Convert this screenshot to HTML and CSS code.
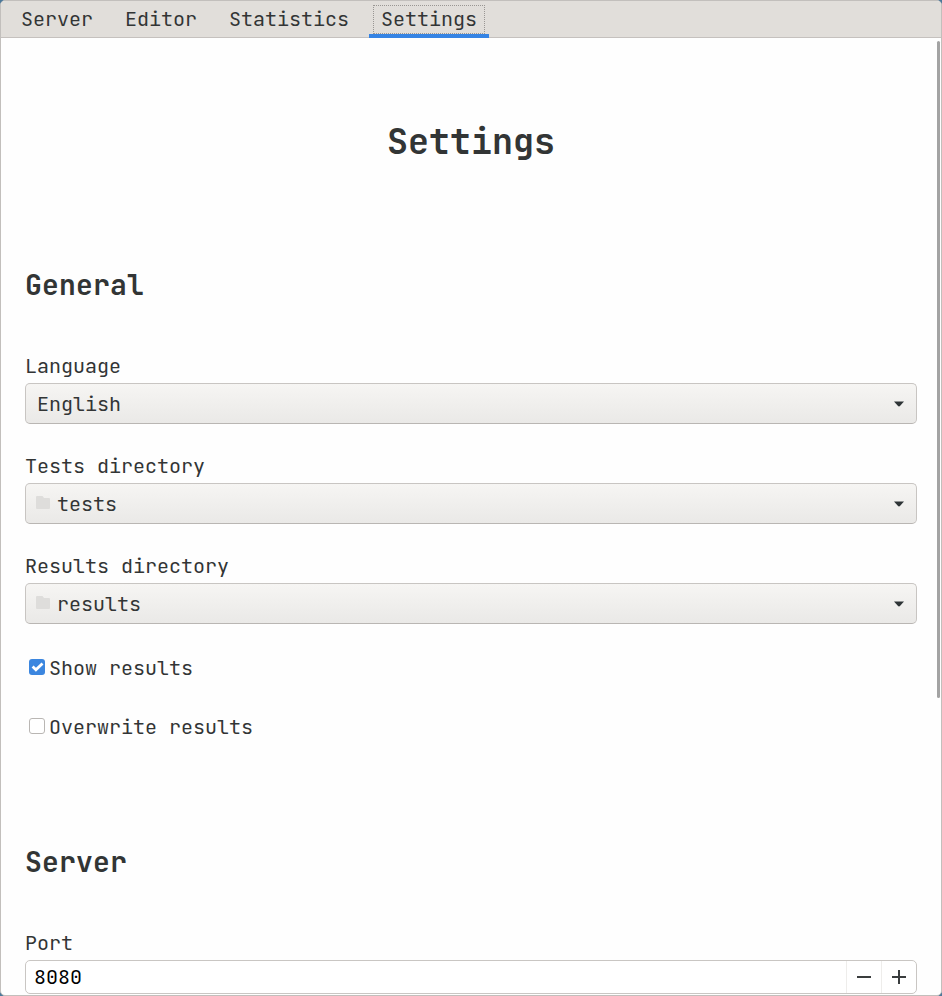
FILE: index.html
```html
<!DOCTYPE html>
<html lang="en">
<head>
<meta charset="utf-8">
<title>Settings</title>
<link rel="stylesheet" href="styles.css">
</head>
<body>
<div class="window">
  <nav class="tabs">
    <div class="tab">Server</div>
    <div class="tab">Editor</div>
    <div class="tab">Statistics</div>
    <div class="tab active">Settings</div>
  </nav>
  <main class="page">
    <h1>Settings</h1>
    <h2>General</h2>
    <div class="field">
      <div class="label">Language</div>
      <div class="select"><span class="text">English</span><svg class="arrow" width="10" height="6" viewBox="0 0 10 6"><path d="M0 .5h10L6.200 4.800Q5 6 3.800 4.800z"/></svg></div>
    </div>
    <div class="field">
      <div class="label">Tests directory</div>
      <div class="select"><svg class="folder" width="14" height="13" viewBox="0 0 14 13"><path d="M0 1q0-1 1-1h5.500l1.500 2h5q1 0 1 1v9q0 1-1 1H1q-1 0-1-1z"/></svg><span class="text">tests</span><svg class="arrow" width="10" height="6" viewBox="0 0 10 6"><path d="M0 .5h10L6.200 4.800Q5 6 3.800 4.800z"/></svg></div>
    </div>
    <div class="field">
      <div class="label">Results directory</div>
      <div class="select"><svg class="folder" width="14" height="13" viewBox="0 0 14 13"><path d="M0 1q0-1 1-1h5.500l1.500 2h5q1 0 1 1v9q0 1-1 1H1q-1 0-1-1z"/></svg><span class="text">results</span><svg class="arrow" width="10" height="6" viewBox="0 0 10 6"><path d="M0 .5h10L6.200 4.800Q5 6 3.800 4.800z"/></svg></div>
    </div>
    <div class="option"><span class="box checked"><svg width="16" height="16" viewBox="0 0 16 16"><path d="M3.600 7.600l3.300 3.200L13.500 4.500"/></svg></span><span class="text">Show results</span></div>
    <div class="option"><span class="box"></span><span class="text">Overwrite results</span></div>
    <h2 class="later">Server</h2>
    <div class="label">Port</div>
    <div class="spin">
      <span class="value">8080</span>
      <span class="step"><svg width="16" height="16" viewBox="0 0 16 16"><path d="M1 8h14"/></svg></span>
      <span class="step"><svg width="16" height="16" viewBox="0 0 16 16"><path d="M1 8h14M8 1v14"/></svg></span>
    </div>
  </main>
  <div class="scrollbar"></div>
</div>
</body>
</html>
```
FILE: styles.css
```css
* { box-sizing: border-box; }
html { background: #4c7899; overflow: hidden; }
body {
  margin: 0;
  font: 20px/27px "JetBrains Mono", "DejaVu Sans Mono", monospace;
  color: #323535;
}
svg { display: block; flex: none; }
.window {
  position: relative;
  height: 996px;
  border: 1px solid #c2bfbc;
  border-radius: 5px;
  background: #fefefe;
  overflow: hidden;
}
.tabs {
  display: flex;
  gap: 8px;
  height: 37px;
  padding-left: 8px;
  background: #e1deda;
  border-bottom: 1px solid #c5c1be;
}
.tab {
  position: relative;
  height: 36px;
  padding: 0 12px;
  line-height: 36px;
}
.active { height: 37px; box-shadow: inset 0 -4px #3584e4; }
.active::after {
  content: "";
  position: absolute;
  inset: 4px 4px 4px;
  border: 1px dotted #999693;
}
.page { padding: 80px 24px 0; }
h1, h2 { font-weight: bold; }
h1 {
  margin: 0 0 101px;
  font-size: 35px;
  line-height: 47px;
  text-align: center;
}
h2 { margin: 0 0 49px; font-size: 28px; line-height: 38px; letter-spacing: 0.2px; }
.later { margin-top: 103px; }
.label { height: 30px; }
.field { height: 100px; }
.select {
  display: flex;
  align-items: center;
  height: 41px;
  padding: 0 12px 0 11px;
  border: 1px solid #c8c5c2;
  border-bottom-color: #b9b6b3;
  border-radius: 5px;
  background: linear-gradient(#f6f5f3, #eae9e7);
}
.select:has(.folder) { padding-left: 10px; }
.text { padding-top: 2px; }
.folder { margin: -2px 7px 0 0; fill: #dedddb; }
.arrow { margin-left: auto; fill: #2e3436; }
.option { display: flex; align-items: center; height: 27px; margin: 1px 0 32px 4px; }
.option + .option { margin-top: 0; margin-bottom: 0; }
.box {
  width: 16px;
  height: 16px;
  margin: -2px 4px 0 0;
  border: 1px solid #b9b6b3;
  border-radius: 3px;
  background: #fff;
}
.checked { border: 0; background: #3b86df; }
.checked path { fill: none; stroke: #fff; stroke-width: 2.8; }
.spin {
  display: flex;
  height: 34px;
  border: 1px solid #c9c6c3;
  border-radius: 5px;
  background: #fff;
  line-height: 32px;
  color: #000;
}
.value { flex: 1; padding-left: 8px; }
.step {
  display: grid;
  place-items: center;
  width: 35px;
  border-left: 1px solid #eeedeb;
}
.step path { stroke: #3a3d3e; stroke-width: 2; }
.scrollbar {
  position: absolute;
  top: 40px;
  right: 1px;
  width: 3px;
  height: 657px;
  border-radius: 2px;
  background: #a3a3a3;
}
```
